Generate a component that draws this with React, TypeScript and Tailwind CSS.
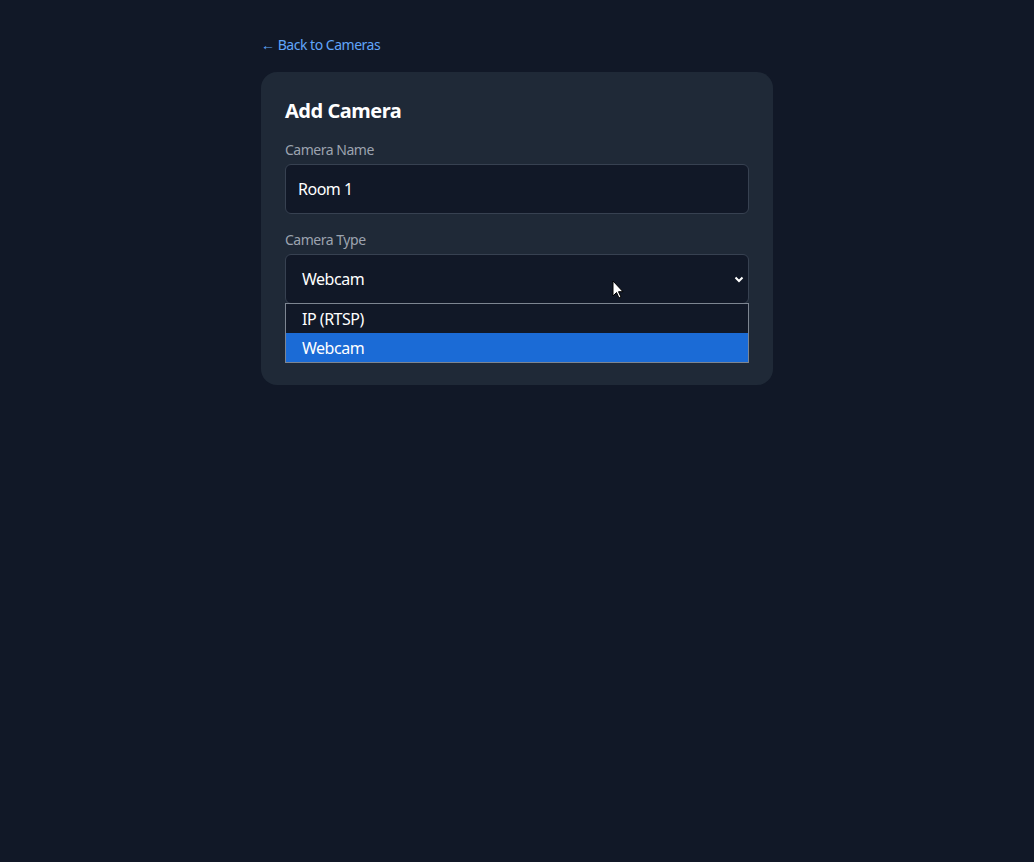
import { FC, ReactElement } from "react";

const App: FC = (): ReactElement => {
  return (
    <div
      className="min-h-screen w-full bg-[#111827] text-white tracking-[-0.03em]"
      style={{ fontFamily: '"Noto Sans", "Open Sans", sans-serif' }}
    >
      <div className="max-w-lg mx-auto pt-[35px]">
        <a href="#" className="block text-sm leading-5 text-[#60a5fa] mb-[17px]">
          ← Back to Cameras
        </a>

        <div className="bg-[#1f2937] rounded-2xl p-6">
          <h1 className="text-xl leading-7 font-bold mb-[15px] pt-[1px]">Add Camera</h1>

          <label className="block text-sm leading-5 text-[#9ca3af] mb-1">
            Camera Name
          </label>
          <div className="h-[50px] flex items-center px-3 bg-[#111827] border border-[#374151] rounded-md text-base mb-4">
            Room 1
          </div>

          <label className="block text-sm leading-5 text-[#9ca3af] mb-1">
            Camera Type
          </label>
          <div className="relative">
            <div className="h-[50px] flex items-center justify-between pl-4 pr-1 bg-[#111827] border border-[#374151] rounded-md text-base">
              <span>Webcam</span>
              <svg width="10" height="7" viewBox="0 0 10 7" fill="none">
                <path d="M1.5 1.5L5 5l3.5-3.5" stroke="white" strokeWidth="2" />
              </svg>
            </div>

            {/* hidden under the open dropdown */}
            <button className="mt-4 w-full h-[41px] rounded-md bg-[#2563eb] text-sm font-semibold">
              Add Camera
            </button>

            {/* native dropdown list */}
            <div className="absolute left-0 right-0 top-[49px] border border-[#7d8591] bg-[#111827] text-base">
              <div className="h-[29px] flex items-center pl-4">IP (RTSP)</div>
              <div className="h-[29px] flex items-center pl-4 bg-[#1b6bd6]">Webcam</div>
            </div>

            {/* mouse pointer */}
            <svg
              className="absolute left-[327px] top-[26px]"
              width="12"
              height="19"
              viewBox="0 0 12 19"
            >
              <path
                d="M1 1v15l3.5-3.5 2.5 5.5 2-1-2.5-5.3H11z"
                fill="white"
                stroke="black"
                strokeWidth="1"
              />
            </svg>
          </div>
        </div>
      </div>
    </div>
  );
};

export default App;
